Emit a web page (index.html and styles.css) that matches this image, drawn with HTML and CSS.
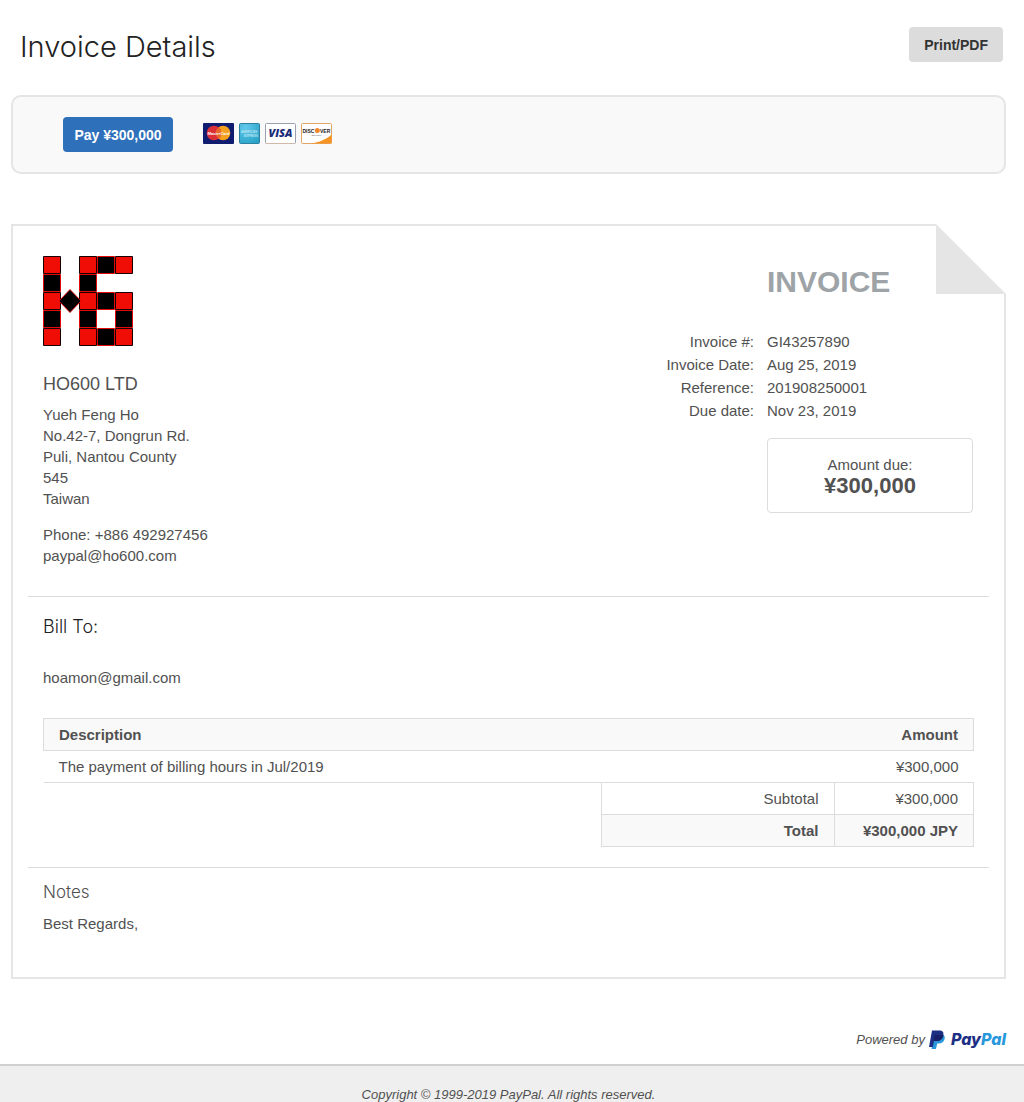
FILE: index.html
```html
<!DOCTYPE html>
<html lang="en">
<head>
<meta charset="utf-8">
<meta name="viewport" content="width=device-width, initial-scale=1">
<title>Invoice Details</title>
<link rel="stylesheet" href="styles.css">
</head>
<body>
<div class="page">
  <header class="page-header">
    <h1 class="page-title">Invoice Details</h1>
    <button class="button button-secondary" type="button">Print/PDF</button>
  </header>

  <section class="pay-panel" aria-label="Payment">
    <button class="button button-primary" type="button">Pay ¥300,000</button>
    <div class="cards">
      <svg width="31" height="21" viewBox="0 0 31 21" role="img" aria-label="MasterCard">
        <rect width="31" height="21" rx="1" fill="#101c70"/>
        <circle cx="20" cy="10" r="7.3" fill="#f6a01f"/>
        <circle cx="11" cy="10" r="7.3" fill="#db3038"/>
        <path d="M15.5 4.2a7.3 7.3 0 0 1 0 11.6a7.3 7.3 0 0 1 0-11.6z" fill="#e8682b"/>
        <text class="card-mastercard" x="15.500" y="12" text-anchor="middle">MasterCard</text>
      </svg>
      <svg width="21" height="21" viewBox="0 0 21 21" role="img" aria-label="American Express">
        <defs><radialGradient id="amex" cx=".3" cy=".2" r="1"><stop offset="0" stop-color="#62c8eb"/><stop offset="1" stop-color="#239fc4"/></radialGradient></defs>
        <rect x=".5" y=".5" width="20" height="20" rx="1" fill="url(#amex)" stroke="#2d819e"/>
        <text class="card-amex" x="10" y="10" text-anchor="middle">AMERICAN</text>
        <text class="card-amex" x="12" y="14" text-anchor="middle">EXPRESS</text>
      </svg>
      <svg width="31" height="21" viewBox="0 0 31 21" role="img" aria-label="Visa">
        <rect x=".5" y=".5" width="30" height="20" rx="1" fill="#fff" stroke="#9aa0af"/>
        <path d="M1 20.5h29" stroke="#cfb9a9"/>
        <text class="card-visa" x="15.500" y="14" text-anchor="middle">VISA</text>
      </svg>
      <svg width="31" height="21" viewBox="0 0 31 21" role="img" aria-label="Discover">
        <rect x=".5" y=".5" width="30" height="20" rx="1" fill="#fff" stroke="#e3a566"/>
        <path d="M10 20.5C18 19.500 26 16 30.500 11.500V20.500z" fill="#f59425"/>
        <circle cx="16.300" cy="7.500" r="2.500" fill="#f5882a"/>
        <text class="card-discover" x="1.500" y="9.500">DISC</text>
        <text class="card-discover" x="19" y="9.500">VER</text>
        <text class="card-network" x="15.500" y="13" text-anchor="middle">NETWORK</text>
      </svg>
    </div>
  </section>

  <main class="invoice">
    <svg class="fold" width="70" height="70" viewBox="0 0 70 70" aria-hidden="true"><path d="M0 0v70h70z" fill="#e5e5e5"/></svg>

    <section class="summary">
      <div class="seller">
        <svg class="logo" width="90" height="90" viewBox="0 0 90 90" role="img" aria-label="HO600">
          <g fill="#f00d05" stroke="#180000" stroke-linejoin="round">
            <path d="M.5.500h17v17H.5zM36.500.500h17v17h-17zM72.500.500h17v17h-17zM.5 36.500h17v17H.5zM36.500 36.500h17v17h-17zM72.500 36.500h17v17h-17zM.5 72.500h17v17H.5zM36.500 72.500h17v17h-17zM72.500 72.500h17v17h-17z"/>
          </g>
          <g fill="#000" stroke="#e00a0a" stroke-linejoin="round">
            <path d="M54.500.500h17v17h-17zM.5 18.500h17v17H.5zM36.500 18.500h17v17h-17zM54.500 36.500h17v17h-17zM.5 54.500h17v17H.5zM36.500 54.500h17v17h-17zM72.500 54.500h17v17h-17zM54.500 72.500h17v17h-17zM27 33.500L38 45 27 56.500 16 45z"/>
          </g>
        </svg>
        <h2 class="seller-name">HO600 LTD</h2>
        <address class="address">Yueh Feng Ho<br>No.42-7, Dongrun Rd.<br>Puli, Nantou County<br>545<br>Taiwan</address>
        <p class="contact">Phone: +886 492927456<br>paypal@ho600.com</p>
      </div>
      <div class="details">
        <h2 class="invoice-heading">INVOICE</h2>
        <dl class="meta">
          <dt>Invoice #:</dt><dd>GI43257890</dd>
          <dt>Invoice Date:</dt><dd>Aug 25, 2019</dd>
          <dt>Reference:</dt><dd>201908250001</dd>
          <dt>Due date:</dt><dd>Nov 23, 2019</dd>
        </dl>
        <div class="amount-due">
          <span>Amount due:</span>
          <strong class="amount-value">¥300,000</strong>
        </div>
      </div>
    </section>

    <section class="billing">
      <h2 class="billing-title">Bill To:</h2>
      <p class="billing-email">hoamon@gmail.com</p>
      <table class="items">
        <colgroup><col class="col-description"><col class="col-label"><col class="col-amount"></colgroup>
        <thead>
          <tr class="shaded"><th class="start" colspan="2" scope="col">Description</th><th scope="col">Amount</th></tr>
        </thead>
        <tbody>
          <tr class="item"><td class="start" colspan="2">The payment of billing hours in Jul/2019</td><td>¥300,000</td></tr>
        </tbody>
        <tfoot>
          <tr><td class="blank" rowspan="2"></td><td class="boxed">Subtotal</td><td class="boxed">¥300,000</td></tr>
          <tr class="total"><td class="boxed">Total</td><td class="boxed">¥300,000 JPY</td></tr>
        </tfoot>
      </table>
    </section>

    <section class="notes">
      <h2 class="notes-title">Notes</h2>
      <p class="notes-text">Best Regards,</p>
    </section>
  </main>

  <div class="powered">
    <span>Powered by</span>
    <svg width="16" height="20" viewBox="0 0 16 20" aria-hidden="true">
      <path d="M5 5h9.500C16 6 16 8 15.400 9.500c-.8 2.800-3 4-6 4H8.200L7 19H2.500z" fill="#2997dc"/>
      <path d="M3 .500h7c4 0 5 2 4.300 5-.9 4-3.300 5.500-7 5.500H5l-1.200 6H0z" fill="#1c2f84"/>
      <path d="M5.500 5h8.900c-.5 4-3.300 6-7.200 6H4.500z" fill="#192068"/>
    </svg>
    <span class="wordmark"><span class="wordmark-pay">Pay</span><span class="wordmark-pal">Pal</span></span>
  </div>
</div>
<footer class="footer">
  <p class="copyright">Copyright © 1999-2019 PayPal. All rights reserved.</p>
</footer>
</body>
</html>
```
FILE: styles.css
```css
* {
  box-sizing: border-box;
}

body,
h1,
h2,
p,
dl,
dd {
  margin: 0;
}

body {
  background: #fff;
  color: #515151;
  font-family: "Liberation Sans", Arial, sans-serif;
  font-size: 15px;
  line-height: 21px;
}

svg {
  display: block;
}

.page {
  margin: 0 18px 0 11px;
}

.page-header {
  display: flex;
  justify-content: space-between;
  align-items: flex-start;
  padding: 27px 3px 28px 9px;
}

.page-title {
  color: #222;
  font-family: Inter, "Liberation Sans", sans-serif;
  font-size: 29px;
  font-weight: 300;
  line-height: 40px;
}

.button {
  height: 35px;
  padding: 1px 11px 0;
  border: 0;
  border-radius: 4px;
  font: bold 14px/34px "Liberation Sans", Arial, sans-serif;
  cursor: pointer;
}

.button-secondary {
  padding: 1px 15px 0;
  background: #dcdcdc;
  color: #333;
}

.button-primary {
  min-width: 110px;
  background: #2f70ba;
  color: #fff;
}

.pay-panel {
  display: flex;
  align-items: center;
  gap: 30px;
  padding: 20px 50px;
  border: 2px solid #e5e5e5;
  border-radius: 10px;
  background: #f9f9f9;
}

.cards {
  display: flex;
  gap: 5px;
  margin-bottom: 2px;
}

.card-mastercard {
  fill: #fff;
  font: italic bold 4px "Liberation Sans", sans-serif;
}

.card-amex {
  fill: #b9e6f3;
  font: bold 3px "Liberation Sans", sans-serif;
}

.card-visa {
  fill: #1c2b7a;
  font: italic 800 11px "Open Sans", sans-serif;
}

.card-discover {
  fill: #222;
  font: bold 5px "Liberation Sans", sans-serif;
}

.card-network {
  fill: #555;
  font: 2px "Liberation Sans", sans-serif;
}

.invoice {
  position: relative;
  margin-top: 50px;
  padding: 0 15px;
  border: 2px solid #e5e5e5;
}

.fold {
  position: absolute;
  top: -2px;
  right: -2px;
  background: #fff;
}

.summary {
  display: flex;
  justify-content: space-between;
  padding: 30px 15px;
}

.seller-name {
  margin: 28px 0 9px;
  font-size: 18px;
  font-weight: normal;
  line-height: 21px;
}

.address {
  font-style: normal;
}

.contact {
  margin-top: 15px;
}

.details {
  display: grid;
  grid-template-columns: auto 206px;
  align-content: start;
  column-gap: 13px;
  margin-right: 1px;
}

.invoice-heading {
  grid-column: 2;
  margin: 8px 0 30px;
  color: #9da3a6;
  font-size: 30px;
  line-height: 36px;
}

.meta {
  display: grid;
  grid-column: 1 / -1;
  grid-template-columns: subgrid;
  line-height: 23px;
}

.meta dt {
  text-align: right;
}

.amount-due {
  display: flex;
  grid-column: 2;
  flex-direction: column;
  align-items: center;
  margin-top: 16px;
  padding: 15px;
  border: 1px solid #dcdcdc;
  border-radius: 4px;
}

.amount-value {
  font-size: 22px;
  line-height: 22px;
}

.billing {
  padding: 18px 15px 20px;
  border-top: 1px solid #dcdcdc;
}

.billing-title,
.notes-title {
  font-family: Inter, "Liberation Sans", sans-serif;
  font-weight: 300;
}

.billing-title {
  color: #222;
  font-size: 18px;
  line-height: 24px;
}

.billing-email {
  margin: 28px 0 30px;
}

.items {
  width: 100%;
  border-collapse: collapse;
  table-layout: fixed;
}

.col-description {
  width: 60%;
}

.col-label {
  width: 25%;
}

.col-amount {
  width: 15%;
}

.items th,
.items td {
  height: 32px;
  padding: 0 15px;
  text-align: right;
}

.items .start {
  text-align: left;
}

.shaded {
  border: 1px solid #dcdcdc;
  background: #f9f9f9;
}

.item {
  border-bottom: 1px solid #dcdcdc;
}

.boxed {
  border: 1px solid #dcdcdc;
}

.total .boxed {
  background: #f9f9f9;
  font-weight: bold;
}

.notes {
  padding: 12px 15px 43px;
  border-top: 1px solid #dcdcdc;
}

.notes-title {
  margin-bottom: 9px;
  font-size: 17px;
  line-height: 24px;
}

.powered {
  display: flex;
  justify-content: flex-end;
  align-items: center;
  gap: 4px;
  margin-top: 50px;
  padding-bottom: 14px;
  font-size: 13px;
  font-style: italic;
}

.wordmark {
  margin-left: 2px;
  font: italic 800 16px/21px Inter, sans-serif;
}

.wordmark-pay {
  color: #1c2f84;
}

.wordmark-pal {
  color: #2997dc;
}

.footer {
  padding: 22px 18px 0 11px;
  border-top: 2px solid #d0d0d0;
  background: #efefef;
}

.copyright {
  font-size: 13px;
  font-style: italic;
  line-height: 14px;
  text-align: center;
}
```
